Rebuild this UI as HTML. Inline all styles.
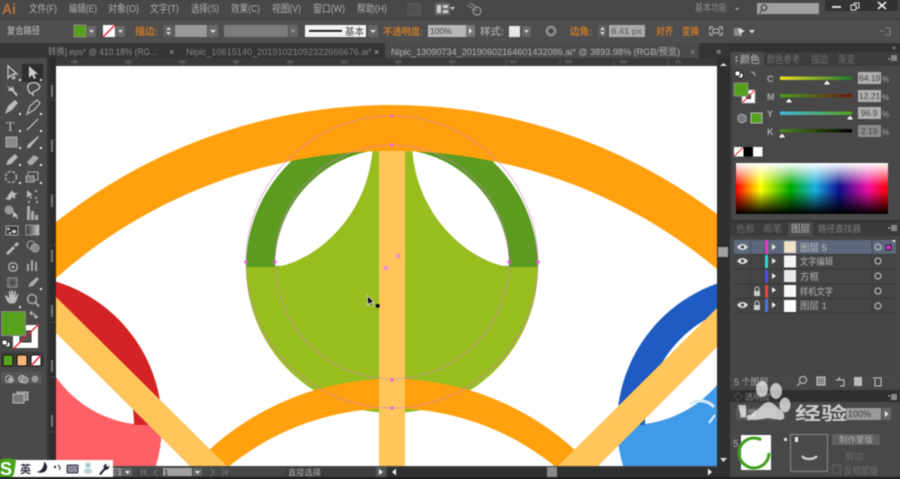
<!DOCTYPE html>
<html><head><meta charset="utf-8"><style>
html,body{margin:0;padding:0;background:#454545;width:900px;height:479px;overflow:hidden}
#w{position:relative;width:900px;height:479px;overflow:hidden}
svg{display:block;filter:blur(.6px)}
text{font-family:"Liberation Sans","Noto Sans CJK SC",sans-serif;fill:#a8a8a8;font-size:10px}
.o{fill:#c9792a;font-weight:bold}
.m{fill:#aeaeae;font-size:10.5px}
.d{fill:#8a8a8a}
.i{fill:#cfcfcf}
.s{stroke:#b8b8b8;fill:none;stroke-width:1.3}
.r{fill:#8f8f8f;font-size:4px}
</style></head><body><div id="w">
<svg width="900" height="479" viewBox="0 0 900 479" xmlns="http://www.w3.org/2000/svg">
<defs><clipPath id="cv"><rect x="56" y="66" width="661" height="400"/></clipPath>
<linearGradient id="sp" x1="0" x2="1" y1="0" y2="0">
<stop offset="0" stop-color="#f00"/><stop offset=".16" stop-color="#ff0"/><stop offset=".36" stop-color="#0a0"/><stop offset=".52" stop-color="#1ab0e0"/><stop offset=".68" stop-color="#10108f"/><stop offset=".87" stop-color="#f010a0"/><stop offset="1" stop-color="#f00"/></linearGradient>
<linearGradient id="sv" x1="0" x2="0" y1="0" y2="1"><stop offset="0" stop-color="#fff"/><stop offset=".45" stop-color="#fff" stop-opacity="0"/><stop offset=".55" stop-color="#000" stop-opacity="0"/><stop offset="1" stop-color="#000"/></linearGradient>
<linearGradient id="c1" x1="0" x2="1"><stop offset="0" stop-color="#f0e020"/><stop offset="1" stop-color="#1a7a2a"/></linearGradient>
<linearGradient id="c2" x1="0" x2="1"><stop offset="0" stop-color="#4aa01e"/><stop offset="1" stop-color="#6a1a10"/></linearGradient>
<linearGradient id="c3" x1="0" x2="1"><stop offset="0" stop-color="#40b8e0"/><stop offset="1" stop-color="#58a01e"/></linearGradient>
<linearGradient id="c4" x1="0" x2="1"><stop offset="0" stop-color="#4e8a1e"/><stop offset="1" stop-color="#000"/></linearGradient>
<linearGradient id="gr" x1="0" x2="1"><stop offset="0" stop-color="#333"/><stop offset="1" stop-color="#ccc"/></linearGradient>
</defs>

<!-- chrome -->
<rect width="900" height="479" fill="#474747"/>
<rect y="0" width="900" height="20" fill="#484848"/>
<rect y="20" width="900" height="23" fill="#4e4e4e"/>
<rect y="19" width="900" height="1" fill="#3a3a3a"/>
<rect y="43" width="900" height="15" fill="#353535"/>

<!-- menu -->
<text x="2" y="14" style="font-size:15px;font-weight:bold;fill:#b5703e" textLength="14" lengthAdjust="spacingAndGlyphs">Ai</text>
<text class="m" x="29" y="12" textLength="28" lengthAdjust="spacingAndGlyphs">文件(F)</text>
<text class="m" x="69" y="12" textLength="28" lengthAdjust="spacingAndGlyphs">编辑(E)</text>
<text class="m" x="108" y="12" textLength="31" lengthAdjust="spacingAndGlyphs">对象(O)</text>
<text class="m" x="150" y="12" textLength="29" lengthAdjust="spacingAndGlyphs">文字(T)</text>
<text class="m" x="191" y="12" textLength="28" lengthAdjust="spacingAndGlyphs">选择(S)</text>
<text class="m" x="231" y="12" textLength="29" lengthAdjust="spacingAndGlyphs">效果(C)</text>
<text class="m" x="272" y="12" textLength="29" lengthAdjust="spacingAndGlyphs">视图(V)</text>
<text class="m" x="313" y="12" textLength="32" lengthAdjust="spacingAndGlyphs">窗口(W)</text>
<text class="m" x="357" y="12" textLength="30" lengthAdjust="spacingAndGlyphs">帮助(H)</text>
<rect x="408" y="4" width="12" height="11" fill="#505050" stroke="#5c5c5c"/>
<rect x="435" y="3" width="15" height="12" fill="#6a6a6a"/><path d="M437 5h4v8h-4zM443 5h5v3h-5zM443 10h5v3h-5z" fill="#ccc"/>
<path d="M450 7l5 0-2.500 3z" fill="#ccc"/>
<circle cx="477" cy="11" r="4" fill="none" stroke="#999" stroke-width="1.200"/><path d="M467 5l10 6M470 3l8 5" stroke="#888" fill="none" stroke-width="1.200"/>
<text x="695" y="11" style="font-size:9.500px;fill:#8c8c8c" textLength="32" lengthAdjust="spacingAndGlyphs">基本功能</text>
<path d="M735 8h4l-2 2z" fill="#bbb"/>
<rect x="757" y="3" width="62" height="11" fill="#a0a0a0"/>
<circle cx="764" cy="7.500" r="2.800" fill="none" stroke="#333"/><path d="M762 10l-2 3" stroke="#333"/>
<rect x="825" y="0" width="73" height="11" rx="1" fill="#323232"/>
<rect x="832" y="6" width="9" height="2" fill="#ddd"/>
<rect x="854" y="3" width="5" height="5" fill="none" stroke="#ddd"/><rect x="851" y="5" width="5" height="5" fill="#323232" stroke="#ddd"/>
<path d="M878 2l8 7M886 2l-8 7" stroke="#eee" stroke-width="1.600"/>

<!-- control bar -->
<text x="7" y="34" style="font-size:9.500px;fill:#a4a4a4;font-weight:bold" textLength="33" lengthAdjust="spacingAndGlyphs">复合路径</text>
<rect x="74" y="25" width="12" height="12" fill="#55a01c" stroke="#888"/>
<rect x="87" y="26" width="9" height="11" fill="#686868"/><path d="M89 30h5l-2.500 3z" fill="#ddd"/>
<rect x="103" y="25" width="12" height="12" fill="#fff"/><path d="M103 37l12-12" stroke="#e02030" stroke-width="1.300"/>
<rect x="116" y="26" width="9" height="11" fill="#686868"/><path d="M118 30h5l-2.500 3z" fill="#ddd"/>
<text class="o" x="135" y="35" style="font-size:10px" textLength="23" lengthAdjust="spacingAndGlyphs">描边:</text>
<rect x="163" y="25" width="11" height="12" fill="#5e5e5e"/><path d="M166 30l2.500-3 2.500 3zM166 32l2.500 3 2.500-3z" fill="#ddd"/>
<rect x="175" y="25" width="32" height="12" fill="#999"/>
<rect x="208" y="25" width="10" height="12" fill="#6a6a6a"/><path d="M210 30h6l-3 3z" fill="#ddd"/>
<rect x="224" y="25" width="64" height="12" fill="#7c7c7c"/>
<rect x="289" y="25" width="9" height="12" fill="#666"/><path d="M291 30h4l-2 2.500z" fill="#aaa"/>
<rect x="305" y="25" width="61" height="12" fill="#f2f2f2"/>
<rect x="309" y="30" width="33" height="1.800" fill="#111"/>
<text x="345" y="35" style="font-size:9.500px;fill:#444">基本</text>
<rect x="368" y="25" width="10" height="12" fill="#666"/><path d="M370 30h6l-3 3z" fill="#ddd"/>
<text class="o" x="383" y="35" style="font-size:9.500px" textLength="40" lengthAdjust="spacingAndGlyphs">不透明度:</text>
<rect x="428" y="25" width="46" height="12" fill="#b8b8b8"/>
<text x="430" y="34" style="font-size:8.500px;fill:#444">100%</text>
<rect x="466" y="25" width="9" height="12" fill="#777"/><path d="M469 28l3 3-3 3z" fill="#eee"/>
<text x="480" y="35" style="font-weight:bold;fill:#a0a0a0" textLength="24" lengthAdjust="spacingAndGlyphs">样式:</text>
<rect x="509" y="26" width="11" height="11" fill="#e8e8e8"/>
<rect x="522" y="26" width="9" height="11" fill="#666"/><path d="M524 30h5l-2.500 3z" fill="#ddd"/>
<circle cx="551" cy="31" r="5.500" fill="#8a8a8a"/><circle cx="551" cy="31" r="2.500" fill="#444"/>
<text class="o" x="570" y="35" textLength="22" lengthAdjust="spacingAndGlyphs">边角:</text>
<rect x="598" y="25" width="9" height="12" fill="#5e5e5e"/><path d="M600 30l2.500-3 2.500 3zM600 32l2.500 3 2.500-3z" fill="#ddd"/>
<rect x="609" y="25" width="36" height="12" fill="#aaa"/>
<text x="611" y="34" style="font-size:8.500px;fill:#555" textLength="31" lengthAdjust="spacingAndGlyphs">8.41 px</text>
<text class="o" x="656" y="35" textLength="17" lengthAdjust="spacingAndGlyphs">对齐</text>
<text class="o" x="682" y="35" textLength="17" lengthAdjust="spacingAndGlyphs">变换</text>
<path d="M713 27h-3v3M719 27h3v3M713 35h-3v-3M719 35h3v-3" class="s"/><rect x="713" y="29" width="6" height="4" fill="none" stroke="#bbb"/>
<path d="M734 28h8v8h-8z" fill="#888"/><path d="M738 28l7 3-4 2-1 3z" fill="#ddd"/>
<path d="M749 30h6l-3 3.500z" fill="#ddd"/>
<path d="M880 31h4M885 28h5v7h-5" stroke="#888" fill="none"/>

<!-- tabs -->
<text x="48" y="55" style="font-size:9.500px;fill:#8c8c8c" textLength="109" lengthAdjust="spacingAndGlyphs">转换].eps* @ 410.18% (RG...</text>
<text x="169" y="55" style="font-size:9px;fill:#aaa">×</text>
<text x="186" y="55" style="font-size:9.500px;fill:#828282" textLength="186" lengthAdjust="spacingAndGlyphs">Nipic_10615140_20191021092322666676.ai*</text>
<text x="374" y="55" style="font-size:9px;fill:#bbb">×</text>
<rect x="385" y="43" width="314" height="15" fill="#4b4b4b"/>
<text x="391" y="55" style="font-size:9.500px;fill:#b4b4b4" textLength="289" lengthAdjust="spacingAndGlyphs">Nipic_13090734_20190602164601432086.ai* @ 3893.98% (RGB/预览)</text>
<text x="690" y="55" style="font-size:9px;fill:#999">×</text>
<text x="716" y="54" style="font-size:9px;fill:#ccc">»</text>

<!-- rulers -->
<rect x="47" y="58" width="670" height="8" fill="#3a3a3a"/>
<rect x="47" y="58" width="9" height="421" fill="#2c2c2c"/>
<rect x="47" y="58" width="3" height="421" fill="#333"/>
<path d="M75 60v6M129 60v6M183 60v6M236 60v6M290 60v6M344 60v6M398 60v6M452 60v6M506 60v6M560 60v6M614 60v6M668 60v6" stroke="#666" stroke-width=".6"/>
<g>
<text class="r" x="71" y="63">490</text><text class="r" x="125" y="63">501</text><text class="r" x="179" y="63">504</text><text class="r" x="233" y="63">507</text><text class="r" x="287" y="63">510</text><text class="r" x="341" y="63">513</text><text class="r" x="395" y="63">516</text><text class="r" x="449" y="63">519</text><text class="r" x="510" y="63">522</text><text class="r" x="565" y="63">525</text><text class="r" x="620" y="63">528</text><text class="r" x="675" y="63">531</text>
</g>
<path d="M50 100h6M50 140h6M50 195h6M50 245h6M50 322h6M50 377h6M50 432h6" stroke="#666" stroke-width=".6"/>
<rect x="51" y="85" width="2" height="12" fill="#777"/><rect x="51" y="140" width="2" height="12" fill="#777"/><rect x="51" y="195" width="2" height="12" fill="#777"/><rect x="51" y="250" width="2" height="12" fill="#777"/><rect x="51" y="305" width="2" height="12" fill="#777"/><rect x="51" y="360" width="2" height="12" fill="#777"/><rect x="51" y="415" width="2" height="12" fill="#777"/>

<!-- canvas -->
<rect x="56" y="66" width="661" height="400" fill="#fff"/>
<g clip-path="url(#cv)">
<path d="M56,377 C72,400 100,420 134,424 L162,425 A150,150 0 0 1 153,475 L30,475 L30,377 Z" fill="#fd6066"/>
<path d="M12,275 A150,150 0 0 1 162,425 L134,425 A122,122 0 0 0 12,303 Z" fill="#d42324"/>
<path d="M717,385 C700,405 675,420 645,424 L617,425 A150,150 0 0 0 626,475 L780,475 L780,385 Z" fill="#3f9ae8"/>
<path d="M767,275 A150,150 0 0 0 617,425 L645,425 A122,122 0 0 1 767,303 Z" fill="#1f5cc2"/>
<path d="M246,267 A146,146 0 1 1 538,267 Z" fill="#5a9b20"/>
<path d="M246,267 A146,146 0 0 0 538,267 Z" fill="#98bd1f"/>
<path d="M275,266 A117,117 0 0 1 509,266 Z" fill="#fff"/>
<path d="M275,267 C315,262 372,215 373,140 L412,140 C412,215 470,262 509,267 Z" fill="#98bd1f"/>
<path d="M185,475 A271,271 0 0 1 599,475 L565,475 A258,258 0 0 0 219,475 Z" fill="#ffa00f"/>
<polygon points="56,297 230,469 193,469 56,333" fill="#fec55b"/>
<polygon points="717,308 717,347 595,469 555,469" fill="#fec55b"/>
<rect x="379" y="140" width="26" height="330" fill="#fec55b"/>
<path d="M56,222 A540,540 0 0 1 717,214 L717,269 A507,507 0 0 0 56,278 Z" fill="#ffa00f"/>
<circle cx="392" cy="262" r="146" fill="none" stroke="#d67fc8" stroke-width=".8" opacity=".75"/>
<circle cx="392" cy="262" r="117" fill="none" stroke="#d67fc8" stroke-width=".8" opacity=".75"/>
<g fill="#e860d8">
<circle cx="246" cy="262" r="1.700"/><circle cx="275" cy="262" r="1.700"/><circle cx="509" cy="262" r="1.700"/><circle cx="538" cy="262" r="1.700"/>
<circle cx="392" cy="116" r="1.500"/><circle cx="392" cy="145" r="1.700"/><circle cx="392" cy="380" r="1.700"/><circle cx="392" cy="408" r="1.700"/>
</g>
<circle cx="386" cy="268" r="2" fill="#f0a0d8" stroke="#d878c8" stroke-width=".6"/>
<circle cx="398" cy="256" r="2" fill="#f0a0d8" stroke="#d878c8" stroke-width=".6"/>
<path d="M367.500,295.500v9.500l2.300-2 1.700 3.500 1.500-.7-1.700-3.400h3z" fill="#111" stroke="#eee" stroke-width=".7"/>
<rect x="376" y="304" width="3.500" height="3.500" fill="#000"/>
<path d="M690 404c8-5 18-4 24 3" stroke="#dbeafa" stroke-width="3" fill="none"/>
<path d="M715 415l-6 8" stroke="#e8f2fc" stroke-width="2"/>
</g>

<!-- left toolbar -->
<rect x="0" y="58" width="47" height="421" fill="#4a4a4a"/>
<rect x="22" y="64" width="21" height="18" fill="#2f2f2f"/>
<path d="M8 66v12l3-3 2 4 2-1-2-4h4z" fill="none" stroke="#ccc" stroke-width="1.200"/>
<path d="M29 66v12l3-3 2 4 2-1-2-4h4z" fill="#ccc"/>
<path d="M6 85l5 3 2-2 1 4 4 5-2 1-4-5-4 0 1-3z" fill="#bbb"/>
<path d="M28 88a6 4 0 1 1 9 2l-4 2 0 3-2-2c-2 0-3-3-3-5z" fill="none" stroke="#bbb" stroke-width="1.500"/>
<path d="M5 114l3-8 7-6 3 3-6 7z" fill="#bbb"/>
<path d="M27 114l3-8 7-6 3 3-6 7z" fill="none" stroke="#bbb" stroke-width="1.200"/>
<text x="6" y="131" style="font-size:14px;fill:#bbb;font-family:'Liberation Serif',serif">T</text>
<path d="M27 130l11-11" stroke="#bbb" stroke-width="1.300"/>
<rect x="6" y="137" width="11" height="10" fill="#888" stroke="#aaa"/>
<path d="M27 148c3 0 4-1 5-3l7-8-1-1-8 7c-2 1-3 3-3 5z" fill="#bbb"/>
<path d="M6 165l2-5 7-6 3 3-7 7z" fill="#b8b8b8"/>
<path d="M27 162l7-7 5 3-7 7h-3z" fill="#aaa"/>
<circle cx="11" cy="177" r="5.500" fill="none" stroke="#aaa" stroke-width="1.500" stroke-dasharray="3 1.500"/>
<rect x="28" y="172" width="10" height="8" fill="none" stroke="#aaa"/><rect x="26" y="176" width="8" height="6" fill="#777" stroke="#aaa"/>
<path d="M5 199c4-2 3-6 6-7l1-2 2 3 4 0-3 2 0 4-3-2-2 3z" fill="#bbb"/>
<path d="M27 190v8l2-2 2 3 1-1-2-3h3z" fill="#bbb"/><path d="M35 190h2v2h-2zM35 197h2v2h-2zM28 201h2v2h-2zM36 201h2v2h-2z" fill="#aaa"/>
<circle cx="9" cy="210" r="4.500" fill="#999"/><path d="M13 211v7l2-2 2 3 1-1-2-2h2z" fill="#ccc"/>
<path d="M27 206h3v14h-3zM31 211h3v9h-3zM35 215h3v5h-3z" fill="#aaa"/>
<rect x="6" y="226" width="12" height="9" fill="#333" stroke="#aaa"/><path d="M7 228h3v2h-3zM12 230h4v3h-4zM9 232h2v2h-2z" fill="#ccc"/>
<rect x="26" y="225" width="13" height="10" fill="url(#gr)" stroke="#999"/>
<path d="M6 253l7-7 2 2-7 7zM14 245l3-3 2 2-3 3z" fill="#bbb"/>
<circle cx="31" cy="245" r="4" fill="none" stroke="#aaa"/><circle cx="35" cy="248" r="4" fill="#888" stroke="#aaa"/>
<rect x="9" y="263" width="8" height="8" rx="3" fill="none" stroke="#aaa" stroke-width="1.500"/><circle cx="13" cy="267" r="1.300" fill="#ccc"/>
<path d="M27 264h2v7h-2zM31 260h2v11h-2zM35 262h2v9h-2z" fill="#aaa"/>
<rect x="8" y="278" width="9" height="9" fill="none" stroke="#999"/><path d="M6 280h13M6 285h13M10 276v13M15 276v13" stroke="#888" stroke-width=".5"/>
<path d="M28 287l2-4 7-6 2 2-6 7z" fill="#aaa"/>
<path d="M7 301l-2-5 1-1 3 3v-7l1.500 0 .5 5 .5-6h1.500l.5 6 1-5h1.500l-.5 6 2-3 1 .5-2 6-2 3h-5z" fill="#bbb"/>
<circle cx="32" cy="299" r="4.500" fill="none" stroke="#aaa" stroke-width="1.500"/><path d="M35.500 302.500l3.500 4" stroke="#aaa" stroke-width="2"/>
<g fill="#eee"><rect x="19" y="79" width="2" height="2"/><rect x="40" y="79" width="2" height="2"/><rect x="19" y="113" width="2" height="2"/><rect x="40" y="113" width="2" height="2"/><rect x="19" y="130" width="2" height="2"/><rect x="40" y="130" width="2" height="2"/><rect x="19" y="147" width="2" height="2"/><rect x="40" y="147" width="2" height="2"/><rect x="19" y="164" width="2" height="2"/><rect x="40" y="164" width="2" height="2"/><rect x="19" y="182" width="2" height="2"/><rect x="40" y="182" width="2" height="2"/><rect x="40" y="288" width="2" height="2"/><rect x="19" y="306" width="2" height="2"/></g>

<rect x="13" y="325" width="25" height="23" fill="#fff"/>
<rect x="20" y="331" width="11" height="11" fill="#555" stroke="#333"/>
<path d="M13 349l26-25" stroke="#e02030" stroke-width="1.300"/>
<rect x="1.500" y="311.500" width="24" height="24" fill="#55a01c" stroke="#8a8a8a"/>
<path d="M31 313c3 0 5 2 5 5M32 311l-2 2 2 2M38 316l-2 2-2-2" stroke="#ccc" fill="none"/>
<rect x="5" y="342" width="5" height="5" fill="#fff" stroke="#222"/><rect x="2" y="340" width="5" height="5" fill="#fff" stroke="#222"/>
<rect x="1" y="352" width="43" height="15" fill="#3c3c3c"/>
<rect x="3" y="355" width="10" height="11" rx="2" fill="#55a01c" stroke="#111"/>
<rect x="17" y="355" width="10" height="11" rx="2" fill="#f5b57a" stroke="#111"/>
<rect x="31" y="355" width="10" height="11" rx="2" fill="#fff" stroke="#111"/><path d="M31 366l10-11" stroke="#e02030" stroke-width="1.500"/>
<rect x="1" y="372" width="41" height="12" fill="#555"/>
<circle cx="9" cy="379" r="3.500" fill="none" stroke="#bbb"/><circle cx="11" cy="380" r="3" fill="#aaa"/>
<circle cx="22" cy="379" r="3.500" fill="#888" stroke="#bbb"/><circle cx="25" cy="380" r="3" fill="#888" stroke="#bbb"/>
<circle cx="35" cy="379" r="3.500" fill="#999"/>
<rect x="17" y="392" width="11" height="8" fill="#888" stroke="#bbb"/><rect x="13" y="394" width="11" height="9" fill="#777" stroke="#bbb"/>

<!-- right scroll -->
<rect x="717" y="58" width="13" height="421" fill="#2f2f2f"/>
<path d="M720 66l3.500-3 3.500 3z" fill="#ddd"/>
<rect x="718" y="247" width="10" height="10" fill="#a0a0a0"/>
<path d="M720 458h7l-3.500 4z" fill="#ddd"/>

<!-- right panel -->
<rect x="730" y="43" width="170" height="436" fill="#484848"/>
<rect x="730" y="43" width="170" height="9" fill="#323232"/>
<text x="892" y="50" style="font-size:7px;fill:#bbb">»</text>
<rect x="730" y="52" width="170" height="14" fill="#3d3d3d"/>
<rect x="731" y="52" width="33" height="14" fill="#4c4c4c"/>
<path d="M735 58l1.500-2 1.500 2zM735 60l1.500 2 1.500-2z" fill="#ccc"/>
<text x="740" y="63" style="font-size:10px;fill:#bcbcbc">颜色</text>
<text x="767" y="63" style="font-size:10px;fill:#727272" textLength="33" lengthAdjust="spacingAndGlyphs">颜色参考</text>
<text x="811" y="63" style="font-size:10px;fill:#727272" textLength="17" lengthAdjust="spacingAndGlyphs">描边</text>
<text x="838" y="63" style="font-size:10px;fill:#727272" textLength="17" lengthAdjust="spacingAndGlyphs">渐变</text>
<path d="M888 59h2" stroke="#ccc"/><rect x="891" y="55" width="6" height="6" fill="#888"/>
<rect x="730" y="66" width="2" height="154" fill="#3a3a3a"/>

<rect x="738" y="73" width="5" height="5" fill="#fff" stroke="#222"/><rect x="735" y="71" width="5" height="5" fill="#fff" stroke="#222"/>
<path d="M751 72c3 0 4 2 4 4" stroke="#bbb" fill="none"/>
<rect x="742" y="90" width="13" height="13" fill="#fff" stroke="#aaa"/><rect x="746" y="94" width="5" height="5" fill="#444"/><path d="M742 103l13-13" stroke="#e02030"/>
<rect x="734" y="83" width="14" height="13" fill="#55a01c" stroke="#888"/>
<path d="M742 114l4 2v5l-4 2-4-2v-5z" fill="#777" stroke="#bbb" stroke-width=".8"/>
<rect x="751" y="113" width="11" height="10" fill="#55a01c" stroke="#bbb"/>
<text x="767" y="82" style="font-size:9px;fill:#aaa;font-weight:bold">C</text>
<text x="767" y="100" style="font-size:9px;fill:#aaa;font-weight:bold">M</text>
<text x="767" y="117" style="font-size:9px;fill:#aaa;font-weight:bold">Y</text>
<text x="767" y="135" style="font-size:9px;fill:#aaa;font-weight:bold">K</text>
<rect x="780" y="76.500" width="72" height="3.500" fill="url(#c1)"/>
<rect x="780" y="94" width="72" height="3.500" fill="url(#c2)"/>
<rect x="780" y="111.500" width="72" height="3.500" fill="url(#c3)"/>
<rect x="780" y="129" width="72" height="3.500" fill="url(#c4)"/>
<g fill="#e8e8e8" stroke="#222" stroke-width=".6">
<path d="M827 80l3 3v2h-6v-2z"/><path d="M789 98l3 3v2h-6v-2z"/><path d="M850 115l3 3v2h-6v-2z"/><path d="M782 133l3 3v2h-6v-2z"/></g>
<rect x="858" y="72" width="23" height="12" fill="#b0b0b0"/>
<rect x="858" y="90" width="23" height="12" fill="#b0b0b0"/>
<rect x="858" y="107" width="23" height="12" fill="#b0b0b0"/>
<rect x="858" y="125" width="23" height="12" fill="#8c8c8c"/>
<text x="859" y="81" style="font-size:8.500px;fill:#444">64.19</text>
<text x="859" y="99" style="font-size:8.500px;fill:#444">12.21</text>
<text x="861" y="116" style="font-size:8.500px;fill:#444">96.9</text>
<text x="861" y="134" style="font-size:8.500px;fill:#444">2.19</text>
<text x="882" y="82" style="font-size:8px;fill:#aaa">%</text><text x="882" y="100" style="font-size:8px;fill:#aaa">%</text><text x="882" y="117" style="font-size:8px;fill:#aaa">%</text><text x="882" y="135" style="font-size:8px;fill:#aaa">%</text>
<rect x="734" y="147" width="9.500" height="9.500" fill="#fff"/><path d="M734 156.500l9.500-9.500" stroke="#e02030"/>
<rect x="743.500" y="147" width="9.500" height="9.500" fill="#000"/>
<rect x="753" y="147" width="9.500" height="9.500" fill="#fff"/>
<rect x="736" y="163" width="152" height="51" fill="url(#sp)"/>
<rect x="736" y="163" width="152" height="51" fill="url(#sv)"/>

<!-- layers -->
<rect x="730" y="220" width="170" height="2" fill="#333"/>
<rect x="730" y="222" width="170" height="14" fill="#3b3b3b"/>
<rect x="788" y="222" width="25" height="14" fill="#4c4c4c"/>
<text x="736" y="232" style="font-size:9.500px;fill:#6e6e6e">色板</text>
<text x="763" y="232" style="font-size:9.500px;fill:#6e6e6e">画笔</text>
<text x="791" y="232" style="font-size:9.500px;fill:#bcbcbc">图层</text>
<text x="818" y="232" style="font-size:9px;fill:#7c7c7c" textLength="43" lengthAdjust="spacingAndGlyphs">路径查找器</text>
<path d="M888 228h2" stroke="#ccc"/><rect x="891" y="225" width="6" height="6" fill="#888"/>
<rect x="734" y="236" width="162" height="148" fill="#454545"/>
<rect x="734" y="240" width="162" height="14" fill="#5e687c"/>
<path d="M734 254.500h162M734 269h162M734 284h162M734 298.500h162M734 313h162" stroke="#333" stroke-width=".8"/>
<path d="M750.500 240v73M765 240v73M872 240v73" stroke="#3a3a3a" stroke-width=".7"/>
<g fill="#ddd"><path d="M737 247c3-4 8-4 11 0-3 4-8 4-11 0z"/><path d="M737 261c3-4 8-4 11 0-3 4-8 4-11 0z"/><path d="M737 305c3-4 8-4 11 0-3 4-8 4-11 0z"/></g>
<g fill="#333"><circle cx="742.500" cy="247" r="1.500"/><circle cx="742.500" cy="261" r="1.500"/><circle cx="742.500" cy="305" r="1.500"/></g>
<g fill="#ccc"><rect x="754" y="291" width="6" height="5"/><rect x="754" y="305" width="6" height="5"/></g>
<path d="M755 291v-2a2 2 0 0 1 4 0v2M755 305v-2a2 2 0 0 1 4 0v2" stroke="#ccc" fill="none"/>
<rect x="765" y="240" width="3" height="14" fill="#e83cc8"/>
<rect x="765" y="255" width="3" height="13" fill="#30d8d0"/>
<rect x="765" y="270" width="3" height="13" fill="#5050e8"/>
<rect x="765" y="285" width="3" height="13" fill="#e84a40"/>
<rect x="765" y="299" width="3" height="13" fill="#4878e0"/>
<g fill="#eee"><path d="M772 244l4 3-4 3z"/><path d="M772 258l4 3-4 3z"/><path d="M772 273l4 3-4 3z"/><path d="M772 287l4 3-4 3z"/><path d="M772 302l4 3-4 3z"/></g>
<rect x="784" y="241" width="12" height="12" fill="#f0e4c8" stroke="#999" stroke-width=".5"/>
<rect x="784" y="255.500" width="12" height="12" fill="#f4f4f4"/>
<rect x="784" y="270" width="12" height="12" fill="#eaeaea"/>
<rect x="784" y="285" width="12" height="12" fill="#f8f8f8"/>
<rect x="784" y="300" width="12" height="12" fill="#fff"/>
<text x="800" y="251" style="font-size:9.500px;fill:#c4c4c4">图层 5</text>
<text x="800" y="265" style="font-size:9.500px;fill:#b4b4b4" textLength="33" lengthAdjust="spacingAndGlyphs">文字编辑</text>
<text x="800" y="280" style="font-size:9.500px;fill:#b4b4b4">方框</text>
<text x="800" y="295" style="font-size:9.500px;fill:#b4b4b4" textLength="33" lengthAdjust="spacingAndGlyphs">样机文字</text>
<text x="800" y="309" style="font-size:9.500px;fill:#b4b4b4">图层 1</text>
<g fill="none" stroke="#ccc" stroke-width="1"><circle cx="878" cy="247" r="3"/><circle cx="878" cy="261" r="3"/><circle cx="878" cy="276" r="3"/><circle cx="878" cy="291" r="3"/><circle cx="878" cy="306" r="3"/></g>
<rect x="886" y="245" width="5" height="5" fill="#e030d0" stroke="#222"/>
<path d="M892 240h3v3z" fill="#eee"/>

<rect x="730" y="374" width="170" height="16" fill="#474747"/>
<text x="734" y="385" style="font-size:9px;fill:#aaa">5 个图层</text>
<circle cx="803" cy="380" r="3.500" fill="none" stroke="#ccc"/><path d="M800 383l-3 3" stroke="#ccc"/>
<rect x="817" y="377" width="8" height="8" fill="#888" stroke="#ccc"/>
<path d="M836 380h3v-2l2 2h3v6h-4" stroke="#ccc" fill="none"/>
<rect x="854" y="377" width="8" height="9" fill="#bbb"/>
<path d="M873 378h9M875 379v7h6v-7" stroke="#ccc" fill="none"/>

<rect x="730" y="390" width="170" height="12" fill="#2f2f2f"/>
<text x="734" y="400" style="font-size:8.500px;fill:#888">◇ 透明度</text>
<path d="M888 396h2" stroke="#ccc"/><rect x="891" y="394" width="6" height="6" fill="#888"/>
<rect x="730" y="402" width="170" height="77" fill="#484848"/>
<rect x="736" y="408" width="40" height="12" fill="#5a5a5a"/>
<text x="739" y="417" style="font-size:9px;fill:#aaa">正常</text>
<rect x="846" y="408" width="35" height="12" fill="#9a9a9a"/>
<text x="848" y="417" style="font-size:9px;fill:#444">100%</text>
<rect x="882" y="408" width="9" height="12" fill="#686868"/><path d="M885 411l3.500 3-3.500 3z" fill="#eee"/>
<text x="733" y="447" style="font-size:10px;fill:#aaa">5</text>
<rect x="741" y="435" width="30" height="35" fill="#fff"/>
<circle cx="754" cy="453" r="15" fill="none" stroke="#3fa01e" stroke-width="3" stroke-dasharray="78 16"/>
<rect x="784" y="438" width="3" height="3" fill="#ddd"/>
<rect x="790.500" y="434.500" width="37" height="37" fill="#4a4a4a" stroke="#8a8a8a"/>
<rect x="795" y="437" width="3" height="5" fill="#eee"/>
<path d="M802 456c3 4 11 4 15 0" stroke="#ccc" stroke-width="2.500" fill="none"/>
<rect x="832" y="434" width="48" height="11" fill="#606060"/>
<text x="839" y="443" style="font-size:9px;fill:#b0b0b0" textLength="34" lengthAdjust="spacingAndGlyphs">制作蒙版</text>
<text x="845" y="460" style="font-size:9px;fill:#707070">剪切</text>
<rect x="832.500" y="465" width="8" height="8" fill="none" stroke="#666"/>
<text x="844" y="474" style="font-size:9.500px;fill:#707070" textLength="34" lengthAdjust="spacingAndGlyphs">反相蒙版</text>

<!-- watermark -->
<g fill="#fff" opacity=".68">
<ellipse cx="762" cy="389" rx="6" ry="8"/><ellipse cx="776" cy="391" rx="6" ry="8"/><ellipse cx="785" cy="405" rx="5.500" ry="7.500"/>
<path d="M768 402c-6 1-9 8-14 10-4 2-6 9 2 8l12-2 12 2c6 0 5-6 2-9-5-3-8-9-14-9z"/>
<path d="M738 405h8v12h-5zM747 415h5v5h-5z"/>
</g>
<text x="795" y="420" style="font-size:18px;fill:#fff;opacity:.72;font-weight:bold" textLength="52" lengthAdjust="spacingAndGlyphs">经验</text>

<!-- status -->
<rect x="56" y="466" width="661" height="11" fill="#474747"/>
<rect x="0" y="477" width="900" height="2" fill="#1c1c1c"/>
<rect x="113" y="468" width="9" height="8" fill="#888"/><text x="114" y="475.500" style="font-size:8px;fill:#333">9</text>
<rect x="123" y="468" width="9" height="8" fill="#666"/><path d="M125 471h5l-2.500 3z" fill="#eee"/>
<path d="M142 469v6M147 469l-3 3 3 3M157 469l-3 3 3 3" stroke="#777" fill="none"/>
<rect x="163" y="468" width="29" height="8" fill="#a0a0a0"/><text x="164" y="475.500" style="font-size:8px;fill:#222">1</text>
<rect x="193" y="468" width="9" height="8" fill="#666"/><path d="M195 471h5l-2.500 3z" fill="#eee"/>
<path d="M211 469l3 3-3 3M222 469l3 3-3 3M227 469v6" stroke="#777" fill="none"/>
<rect x="285" y="467" width="90" height="10" fill="#3e3e3e"/>
<text x="288" y="475.500" style="font-size:8.500px;fill:#aeaeae" textLength="33" lengthAdjust="spacingAndGlyphs">直接选择</text>
<rect x="376" y="467" width="10" height="10" fill="#555"/><path d="M379 469l4 3-4 3z" fill="#eee"/>
<rect x="387" y="467" width="330" height="10" fill="#303030"/>
<path d="M396 468.500l-4 3.500 4 3.500z" fill="#eee"/>
<rect x="547" y="467" width="10" height="10" fill="#8a8a8a"/>
<path d="M708 468.500l4 3.500-4 3.500z" fill="#eee"/>

<!-- IME -->
<rect x="0" y="460" width="113" height="17" fill="#fdfdfd"/>
<path d="M0 460c3-2 9-2 13-1l3 2-2 13c-1 3-3 3-5 3H0z" fill="#46a51c"/>
<text x="0" y="475" style="font-size:18px;font-weight:bold;fill:#fff">S</text>
<text x="20" y="473" style="font-size:11px;fill:#334;font-weight:bold">英</text>
<path d="M44 462c0 6-3 9-7 10 5 2 10 0 10-5 0-2-1-4-3-5z" fill="#223"/>
<circle cx="55" cy="467" r="1.200" fill="#223"/><path d="M58 465l2 2-.5 3" stroke="#223" fill="none"/>
<rect x="67" y="465" width="11" height="8" rx="1" fill="#889" stroke="#334"/>
<circle cx="88" cy="465" r="2.500" fill="#a8c8c8"/><ellipse cx="88" cy="471" rx="4" ry="3" fill="#c0d4d4"/>
<path d="M99 474l5-6c-1-2 0-4 3-4l-1 2 2 1 1-2c1 3-1 5-4 5l-4 5z" fill="#223"/>
</svg>
</div></body></html>
